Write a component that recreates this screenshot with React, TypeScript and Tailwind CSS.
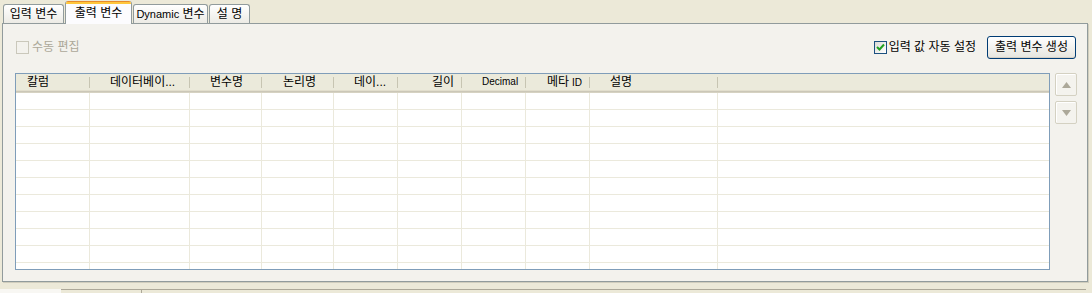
import React from 'react';

const FONT = "font-['Liberation_Sans','Noto_Sans_CJK_KR',sans-serif]";

const columns = [
  { w: 'w-[74px]', label: '칼럼', pl: 'pl-[11px]' },
  { w: 'w-[100px]', label: '데이터베이...', pl: 'pl-[20px]' },
  { w: 'w-[72px]', label: '변수명', pl: 'pl-[20px]' },
  { w: 'w-[72px]', label: '논리명', pl: 'pl-[21px]' },
  { w: 'w-[64px]', label: '데이...', pl: 'pl-[20px]' },
  { w: 'w-[64px]', label: '길이', pl: 'pl-[34px]' },
  { w: 'w-[64px]', label: 'Decimal', pl: 'pl-[20px]', small: true },
  { w: 'w-[64px]', label: '메타', pl: 'pl-[21px]', suffix: 'ID' },
  { w: 'w-[128px]', label: '설명', pl: 'pl-[20px]' },
];

const rows = Array.from({ length: 11 }, (_, i) => i);

const Tab: React.FC<{ label: React.ReactNode; width: string; active?: boolean }> = ({ label, width, active }) => {
  if (active) {
    return (
      <div className={`${width} h-[23px] -mb-px relative z-10 flex flex-col border-x border-[#919b9c] rounded-t-[3px] bg-[#fcfcfe] overflow-hidden`}>
        <div className="h-px bg-[#e68b2c]" />
        <div className="h-[2px] bg-[#ffc73c]" />
        <div className="flex-1 flex items-center justify-center text-[12px] text-black pb-[2px]">{label}</div>
      </div>
    );
  }
  return (
    <div className={`${width} h-[19px] flex items-center justify-center border-t border-x border-[#919b9c] rounded-t-[3px] bg-gradient-to-b from-white to-[#ecebe5] text-[12px] text-black`}>
      {label}
    </div>
  );
};

const ScrollButton: React.FC<{ up?: boolean }> = ({ up }) => (
  <div className="w-[22px] h-[23px] rounded-[2px] border border-[#d4d1c2] bg-[#f4f3ee] shadow-[inset_1px_1px_0_#ffffff] flex items-center justify-center">
    <svg width="9" height="6" viewBox="0 0 9 6">
      {up ? <polygon points="4.5,0 9,6 0,6" fill="#aca899" /> : <polygon points="0,0 9,0 4.5,6" fill="#aca899" />}
    </svg>
  </div>
);

export default function App() {
  return (
    <div className={`w-[1092px] h-[293px] bg-[#ece9d8] overflow-hidden flex flex-col ${FONT}`}>
      {/* tabs */}
      <div className="h-[23px] flex items-end pl-[3px] gap-px">
        <Tab label="입력 변수" width="w-[61px]" />
        <Tab label="출력 변수" width="w-[67px]" active />
        <Tab
          label={
            <span>
              <span className="text-[11px]">Dynamic</span> 변수
            </span>
          }
          width="w-[75px]"
        />
        <Tab label="설 명" width="w-[41px]" />
      </div>

      {/* panel */}
      <div className="ml-[2px] w-[1086px] h-[259px] border border-[#919b9c] bg-[#f3f2ed] shadow-[1px_1px_0_#d0cdbd] flex flex-col pl-[12px]">
        <div className="mt-[11px] w-[1061px] h-[24px] flex items-center justify-between">
          <div className="flex items-center pl-px gap-[3px] text-[12px] text-[#aca899]">
            <div className="w-[13px] h-[13px] border border-[#cac8bb] bg-[#f3f2ed]" />
            <span>수동 편집</span>
          </div>
          <div className="flex items-center">
            <div className="w-[13px] h-[13px] border border-[#1c5180] bg-gradient-to-br from-[#dcdcd7] to-white flex items-center justify-center">
              <svg width="9" height="9" viewBox="0 0 9 9">
                <path d="M1 4 L3.5 6.5 L8 1.5" stroke="#21a121" strokeWidth="2" fill="none" />
              </svg>
            </div>
            <span className="ml-[2px] text-[12px] text-black">입력 값 자동 설정</span>
            <button className="ml-[11px] w-[89px] h-[23px] rounded-[3px] border border-[#003c74] bg-gradient-to-b from-white to-[#e6e5de] shadow-[inset_0_-1px_0_#d6d0c5] text-[12px] text-black flex items-center justify-center">
              출력 변수 생성
            </button>
          </div>
        </div>

        <div className="mt-[14px] flex gap-[5px]">
          {/* grid */}
          <div className="w-[1035px] h-[197px] border border-[#7f9db9] bg-white overflow-hidden flex flex-col">
            <div className="h-[19px] shrink-0 flex bg-[#ebeadb] shadow-[inset_0_-1px_0_#d6d2c2,inset_0_-2px_0_#cbc7b8,inset_0_-3px_0_#e2decd] pb-[3px]">
              {columns.map((c) => (
                <div key={c.label} className={`${c.w} shrink-0 flex items-center`}>
                  <span className={`flex-1 ${c.pl} ${c.small ? 'text-[10px]' : 'text-[12px]'} text-black leading-none whitespace-nowrap`}>
                    {c.label}
                    {c.suffix && <span className="text-[10px]"> {c.suffix}</span>}
                  </span>
                  <span className="w-px h-[11px] bg-[#c7c5b2]" />
                </div>
              ))}
              <div className="flex-1" />
            </div>
            {rows.map((r) => (
              <div key={r} className="h-[17px] shrink-0 flex border-b border-[#ebe9dc]">
                {columns.map((c) => (
                  <div key={c.label} className={`${c.w} shrink-0 border-r border-[#ebe9dc]`} />
                ))}
                <div className="flex-1" />
              </div>
            ))}
          </div>

          {/* scroll buttons */}
          <div className="flex flex-col gap-[5px]">
            <ScrollButton up />
            <ScrollButton />
          </div>
        </div>
      </div>

      {/* bottom strip */}
      <div className="mt-[7px] flex h-[4px]">
        <div className="w-[61px] bg-[#f8f7f3]" />
        <div className="w-[81px] border-t border-r border-[#aca899]" />
        <div className="w-[944px] border-t border-[#aca899]" />
      </div>
    </div>
  );
}
